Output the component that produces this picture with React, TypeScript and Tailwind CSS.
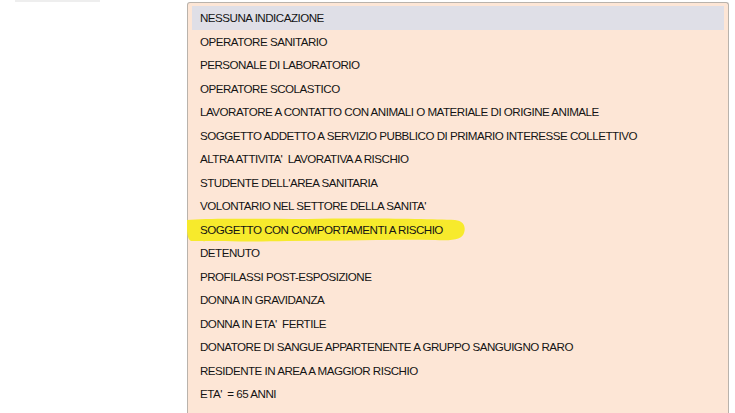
import React from 'react';

const items = [
  'NESSUNA INDICAZIONE',
  'OPERATORE SANITARIO',
  'PERSONALE DI LABORATORIO',
  'OPERATORE SCOLASTICO',
  'LAVORATORE A CONTATTO CON ANIMALI O MATERIALE DI ORIGINE ANIMALE',
  'SOGGETTO ADDETTO A SERVIZIO PUBBLICO DI PRIMARIO INTERESSE COLLETTIVO',
  "ALTRA ATTIVITA'  LAVORATIVA A RISCHIO",
  "STUDENTE DELL'AREA SANITARIA",
  "VOLONTARIO NEL SETTORE DELLA SANITA'",
  'SOGGETTO CON COMPORTAMENTI A RISCHIO',
  'DETENUTO',
  'PROFILASSI POST-ESPOSIZIONE',
  'DONNA IN GRAVIDANZA',
  "DONNA IN ETA'  FERTILE",
  'DONATORE DI SANGUE APPARTENENTE A GRUPPO SANGUIGNO RARO',
  'RESIDENTE IN AREA A MAGGIOR RISCHIO',
  "ETA'  = 65 ANNI",
  "ETA'  > 65 ANNI",
];

export default function App() {
  return (
    <div className="h-[413px] w-[735px] overflow-hidden bg-white">
      <div className="ml-[15px] h-[2px] w-[85px] bg-[#eeeeee]" />
      <div
        className="ml-[187px] w-[542px] rounded-t-[3px] border border-b-0 border-[#b9b3ac] bg-[#fde6d6] px-[4px] pt-[3px]"
        style={{ fontFamily: '"Liberation Sans", Arial, sans-serif' }}
      >
        {items.map((item, i) => (
          <div
            key={i}
            className={
              'relative flex h-[23.5px] items-center pl-[8px] text-[11.6px] tracking-[-0.5px] text-[#141414] ' +
              (i === 0 ? 'bg-[#dfdfe7]' : '')
            }
          >
            {i === 9 && (
              <svg
                className="absolute left-[-5px] top-[-1px]"
                width="280"
                height="26"
                viewBox="0 0 280 26"
              >
                <path
                  d="M0 3 C 20 1, 60 2, 120 2 C 180 1, 240 2, 268 3 C 277 4, 279 10, 277 16 C 275 22, 268 24, 248 23 C 200 22, 150 24, 100 24 C 60 25, 25 24, 4 24 C 0 22, 0 14, 0 8 Z"
                  fill="#f7ea2c"
                />
              </svg>
            )}
            <span className="relative whitespace-pre">{item}</span>
          </div>
        ))}
      </div>
    </div>
  );
}
